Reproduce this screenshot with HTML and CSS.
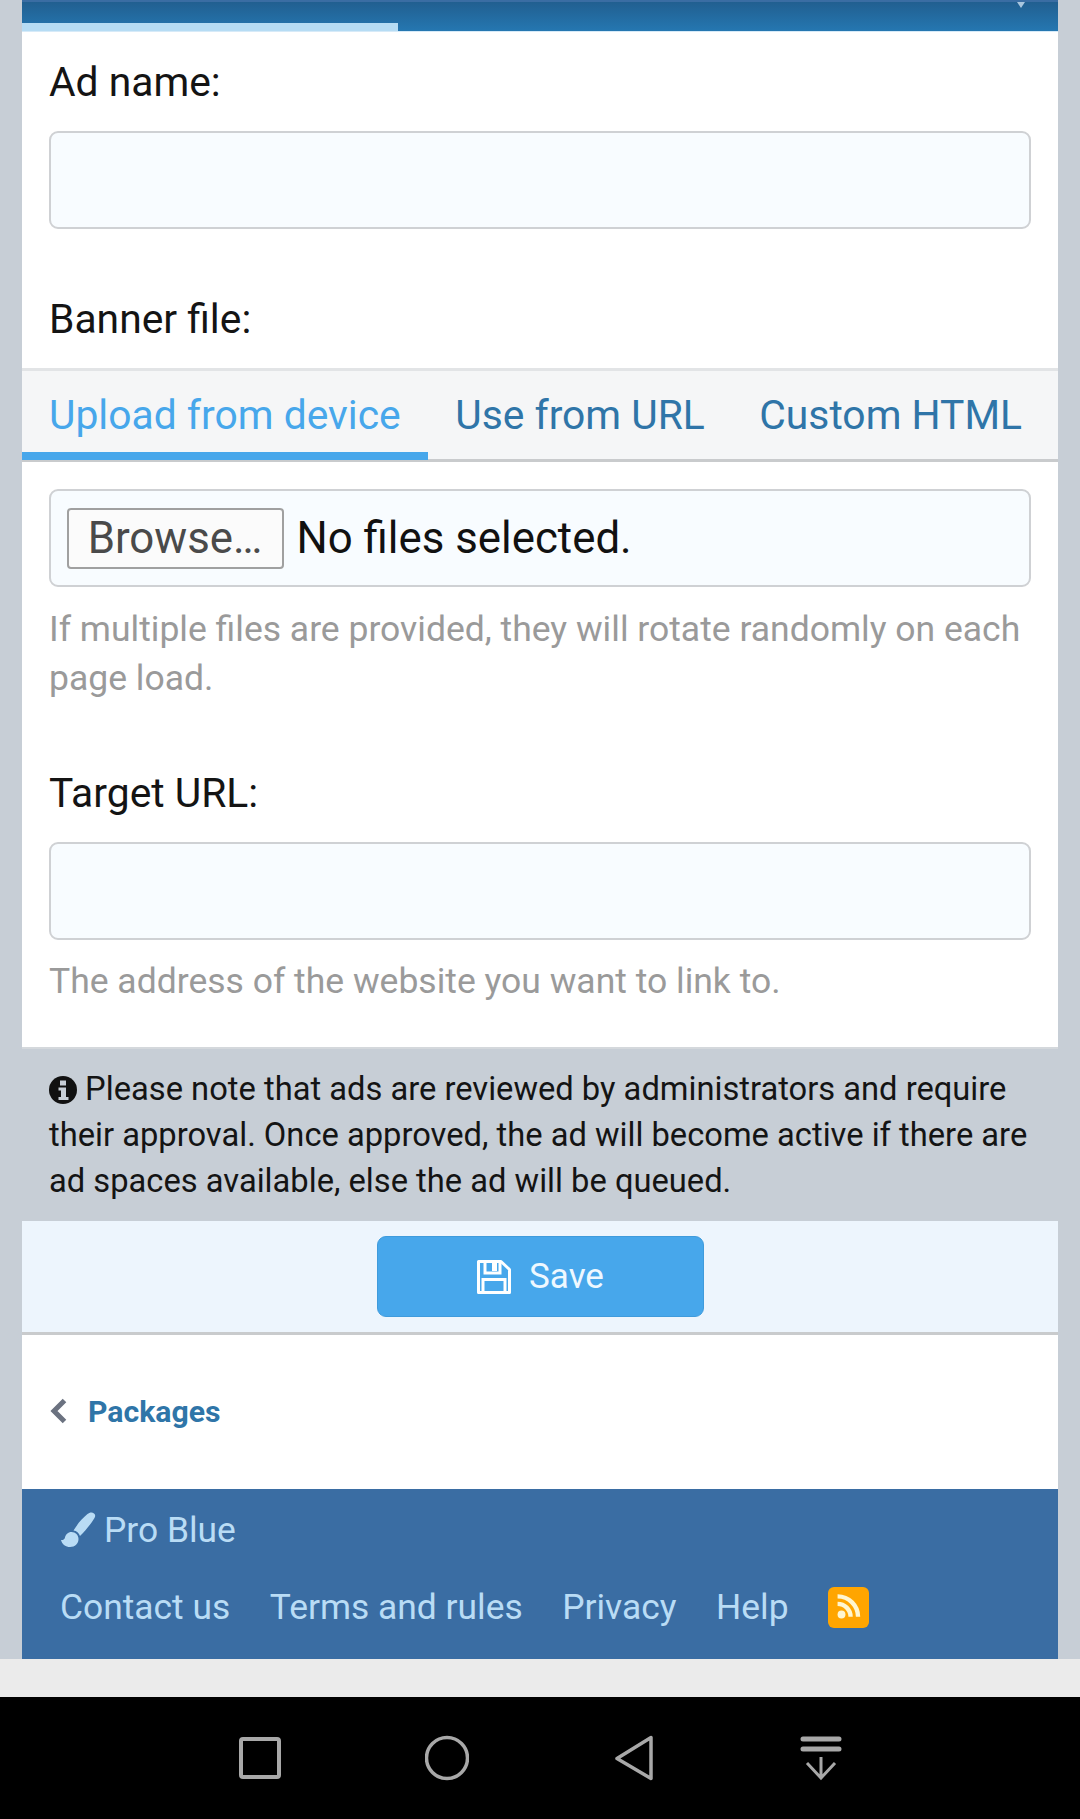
FILE: index.html
```html
<!DOCTYPE html>
<html lang="en">
<head>
<meta charset="utf-8">
<title>Ad form</title>
<link rel="stylesheet" href="styles.css">
</head>
<body>
<div class="viewport">
  <main class="page">
    <div class="progress"><div class="progress-bar"></div><span class="caret"></span></div>
    <section class="panel">
      <div class="field field-name">
        <label class="label">Ad name:</label>
        <div class="input"></div>
      </div>
      <label class="label label-banner">Banner file:</label>
      <nav class="tabs">
        <a class="tab tab-active">Upload from device</a>
        <a class="tab">Use from URL</a>
        <a class="tab">Custom HTML</a>
      </nav>
      <div class="field field-file">
        <div class="input file-input"><span class="browse">Browse…</span><span class="file-status">No files selected.</span></div>
        <p class="hint">If multiple files are provided, they will rotate randomly on each page load.</p>
      </div>
      <div class="field field-url">
        <label class="label">Target URL:</label>
        <div class="input"></div>
        <p class="hint hint-url">The address of the website you want to link to.</p>
      </div>
    </section>
    <p class="notice"><svg class="info" viewBox="0 0 28 28"><circle cx="14" cy="14" r="14" fill="#111"/><path d="M11 4.500h6v5h-6zM9.500 11.500h7.500v9.500h2.500v3h-10v-3h2.500v-6.500h-2.500z" fill="#c7ced6"/></svg> Please note that ads are reviewed by administrators and require their approval. Once approved, the ad will become active if there are ad spaces available, else the ad will be queued.</p>
    <div class="actions">
      <button class="save"><svg class="save-icon" viewBox="0 0 36 36"><path d="M3.500 2.500H25L33.500 10.500V33.500H2.500V2.500Z" fill="none" stroke="#fff" stroke-width="3" stroke-linejoin="round"/><path d="M9 3V14H24V3" fill="none" stroke="#fff" stroke-width="3"/><path d="M16 4h5v8h-5z" fill="#fff"/><path d="M7 33V20.500H29V33" fill="none" stroke="#fff" stroke-width="3"/></svg>Save</button>
    </div>
    <section class="breadcrumb">
      <svg class="chevron" viewBox="0 0 19 28"><path d="M15.500 3.500L5 14L15.500 24.500" fill="none" stroke="#6b7280" stroke-width="5"/></svg>
      <a class="crumb">Packages</a>
    </section>
    <footer class="footer">
      <div class="style-row"><svg class="brush" viewBox="0 0 36 36"><path d="M34 1.500c-2-1.600-4.500-1-6.500.6C22 6.500 17.500 12 13.500 18.500c3 .4 5.500 2.500 6.500 5.500C25.500 18.500 31 12 34.500 6c1-1.800 1-3.500-.5-4.500zM11.500 20c-3.500 0-6 2.500-6.500 5.500-.3 1.800-1.800 2.800-4 2.500 1 4.500 5 7 9 7 5 0 8.500-3.500 8.500-8 0-4-3-7-7-7z" fill="#b9dcf5"/></svg><span>Pro Blue</span></div>
      <div class="links">
        <a>Contact us</a><a>Terms and rules</a><a>Privacy</a><a>Help</a>
        <span class="rss"><svg viewBox="2 6 33 33"><circle cx="9" cy="32" r="5" fill="#fff6d0"/><path d="M4 18.500a16.500 16.500 0 0 1 16.500 16.500M4 9a26 26 0 0 1 26 26" fill="none" stroke="#fff6d0" stroke-width="5.500"/></svg></span>
      </div>
    </footer>
  </main>
  <div class="browser-strip"></div>
  <div class="navbar">
    <svg class="nav-icon" viewBox="0 0 44 48"><rect x="3" y="5" width="38" height="38" rx="2" fill="none" stroke="#a8a8a8" stroke-width="4"/></svg>
    <svg class="nav-icon" viewBox="0 0 44 48"><circle cx="22" cy="24" r="20.500" fill="none" stroke="#a8a8a8" stroke-width="3.500"/></svg>
    <svg class="nav-icon" viewBox="0 0 44 48"><path d="M39 3.500V44.500L5 24.500Z" fill="none" stroke="#a8a8a8" stroke-width="3.500" stroke-linejoin="round"/></svg>
    <svg class="nav-icon" viewBox="0 0 44 48"><path d="M4 5H40M4 15H40" stroke="#a8a8a8" stroke-width="5" stroke-linecap="round"/><path d="M22 23V44M8 29L22 44L36 29" fill="none" stroke="#a8a8a8" stroke-width="3"/></svg>
  </div>
</div>
</body>
</html>
```
FILE: styles.css
```css
* { box-sizing: border-box; }
html, body { margin: 0; padding: 0; }
body { font-family: Roboto, "Liberation Sans", sans-serif; background: #c7ced6; }
.viewport { width: 1080px; height: 1819px; overflow: hidden; display: flex; flex-direction: column; }
.page { height: 1659px; padding: 0 22px; display: flex; flex-direction: column; }
.progress { height: 32px; flex: none; background: linear-gradient(#215f90, #2577b1); position: relative; border-bottom: 1px solid #d6eaf8; border-top: 2px solid #3a6da3; }
.progress-bar { position: absolute; left: 0; bottom: 0; width: 376px; height: 8px; background: #b6dcf4; }
.caret { position: absolute; right: 33px; top: 0; border: 4px solid transparent; border-top: 6px solid #a9c6de; }
.panel { height: 1017px; flex: none; background: #fff; display: flex; flex-direction: column; border-bottom: 2px solid #d4d8dc; }
.field { padding: 0 27px; }
.label { display: block; font-size: 40.800px; line-height: 46px; color: #141414; }
.field-name { padding-top: 27px; }
.input { height: 98px; margin-top: 26px; background: #f8fcff; border: 2px solid #cfd1d4; border-radius: 9px; }
.label-banner { padding: 0 27px; margin-top: 67px; }
.tabs { display: flex; height: 94px; margin-top: 26px; background: #f5f6f7; border-top: 3px solid #e2e4e6; border-bottom: 3px solid #c9cbcd; gap: 54.500px; padding: 0 27px; }
.tab { font-size: 40.800px; line-height: 89px; height: 91px; color: #2f75a8; position: relative; white-space: nowrap; }
.tab-active { color: #47a7eb; }
.tab-active::after { content: ""; position: absolute; left: -27px; right: -27px; bottom: 2px; height: 8px; background: #47a7eb; }
.field-file { padding-top: 27px; }
.file-input { margin-top: 0; display: flex; align-items: center; padding-left: 15.500px; gap: 13px; }
.browse { width: 217px; height: 61px; display: flex; align-items: center; justify-content: center; font-size: 43.800px; color: #4a4a4a; background: #fbfbfb; border: 2px solid #a0a0a0; border-radius: 4px; }
.file-status { font-size: 43.800px; color: #111; }
.hint { margin: 18px 0 0; font-size: 35.500px; line-height: 49px; color: #9a9a9a; }
.field-url { padding-top: 67px; }
.hint-url { margin-top: 17px; }
.notice { height: 172px; flex: none; margin: 0; padding: 17px 20px 0 27px; font-size: 32.700px; line-height: 46px; color: #141414; }
.info { width: 28px; height: 28px; vertical-align: -4px; }
.actions { height: 114px; flex: none; background: #edf5fd; border-bottom: 3px solid #c9cbcd; padding-top: 15px; display: flex; justify-content: center; align-items: flex-start; }
.save { width: 327px; height: 81px; background: #47a7eb; border: 1px solid #3f9bdc; border-radius: 9px; color: #eef8ff; font: 35px Roboto, sans-serif; display: flex; align-items: center; justify-content: center; gap: 17px; padding: 0; }
.save-icon { width: 36px; height: 36px; }
.breadcrumb { height: 154px; flex: none; background: #fff; padding: 0 27px 2px; display: flex; align-items: center; gap: 20px; }
.chevron { width: 19px; height: 28px; }
.crumb { font-size: 30.200px; font-weight: 700; color: #2f75a8; }
.footer { height: 170px; flex: none; background: #3a6da3; padding: 20px 38px 0; color: #b9dcf5; font-size: 35.400px; }
.style-row { display: flex; align-items: center; gap: 8px; height: 42px; }
.brush { width: 36px; height: 36px; }
.links { display: flex; align-items: center; gap: 39.500px; margin-top: 35px; white-space: nowrap; }
.rss { width: 41px; height: 41px; background: #ffa500; border-radius: 6px; display: flex; align-items: center; justify-content: center; }
.rss svg { width: 26px; height: 26px; }
.browser-strip { height: 38px; flex: none; background: #ebebeb; }
.navbar { flex: 1; background: #000; display: flex; justify-content: center; align-items: flex-start; padding-top: 37px; gap: 143px; }
.nav-icon { width: 44px; height: 48px; }
```
